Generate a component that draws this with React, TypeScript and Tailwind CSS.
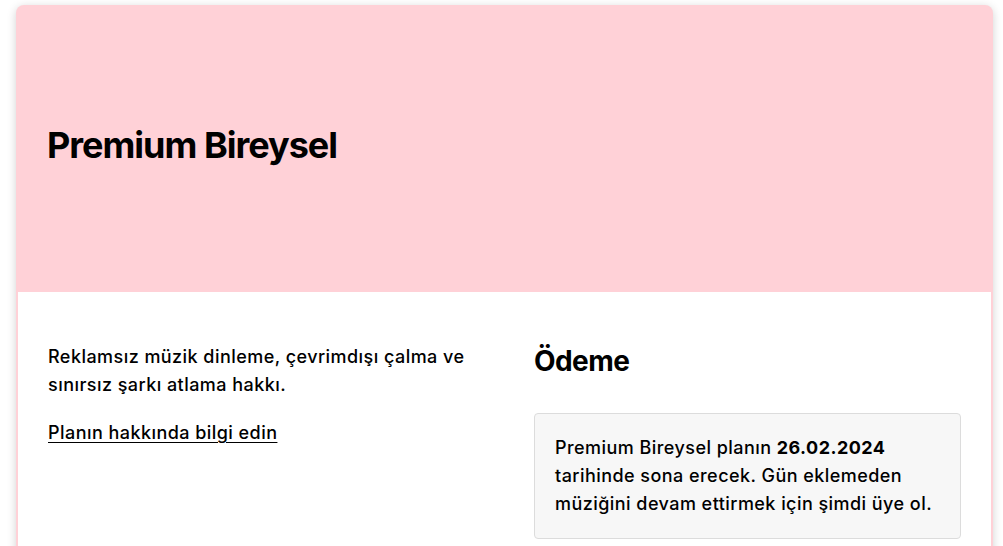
export default function App() {
  return (
    <main
      className="min-h-screen bg-white px-4 pt-[5px]"
      style={{ fontFamily: "Inter, 'Noto Sans', sans-serif" }}
    >
      <section className="w-[977px] overflow-hidden rounded-lg bg-[#ffd1d7] shadow-[0_2px_10px_rgba(0,0,0,0.18)]">
        <header className="flex h-[287px] items-center px-[31px] pb-2">
          <h1 className="text-[36px] font-bold leading-none tracking-[-0.028em] text-black">
            Premium Bireysel
          </h1>
        </header>
        <div className="mx-[2px] grid grid-cols-[427px_427px] gap-[59px] bg-white pl-[30px] pr-[30px] pt-[51px] pb-10 text-[18px] font-medium leading-[28px] text-black">
          <div>
            <p className="tracking-[0.025em]">
              Reklamsız müzik dinleme, çevrimdışı çalma ve sınırsız şarkı atlama hakkı.
            </p>
            <a href="#" className="mt-[20px] inline-block underline underline-offset-[3px] tracking-[0.025em]">
              Planın hakkında bilgi edin
            </a>
          </div>
          <div>
            <h2 className="text-[28px] font-bold leading-[36px] tracking-[-0.02em]">Ödeme</h2>
            <div className="mt-[34px] rounded border border-[#dcdcdc] bg-[#f7f7f7] px-5 py-5 tracking-[0.025em]">
              Premium Bireysel planın <span className="font-bold">26.02.2024</span> tarihinde sona
              erecek. Gün eklemeden müziğini devam ettirmek için şimdi üye ol.
            </div>
          </div>
        </div>
      </section>
    </main>
  );
}
